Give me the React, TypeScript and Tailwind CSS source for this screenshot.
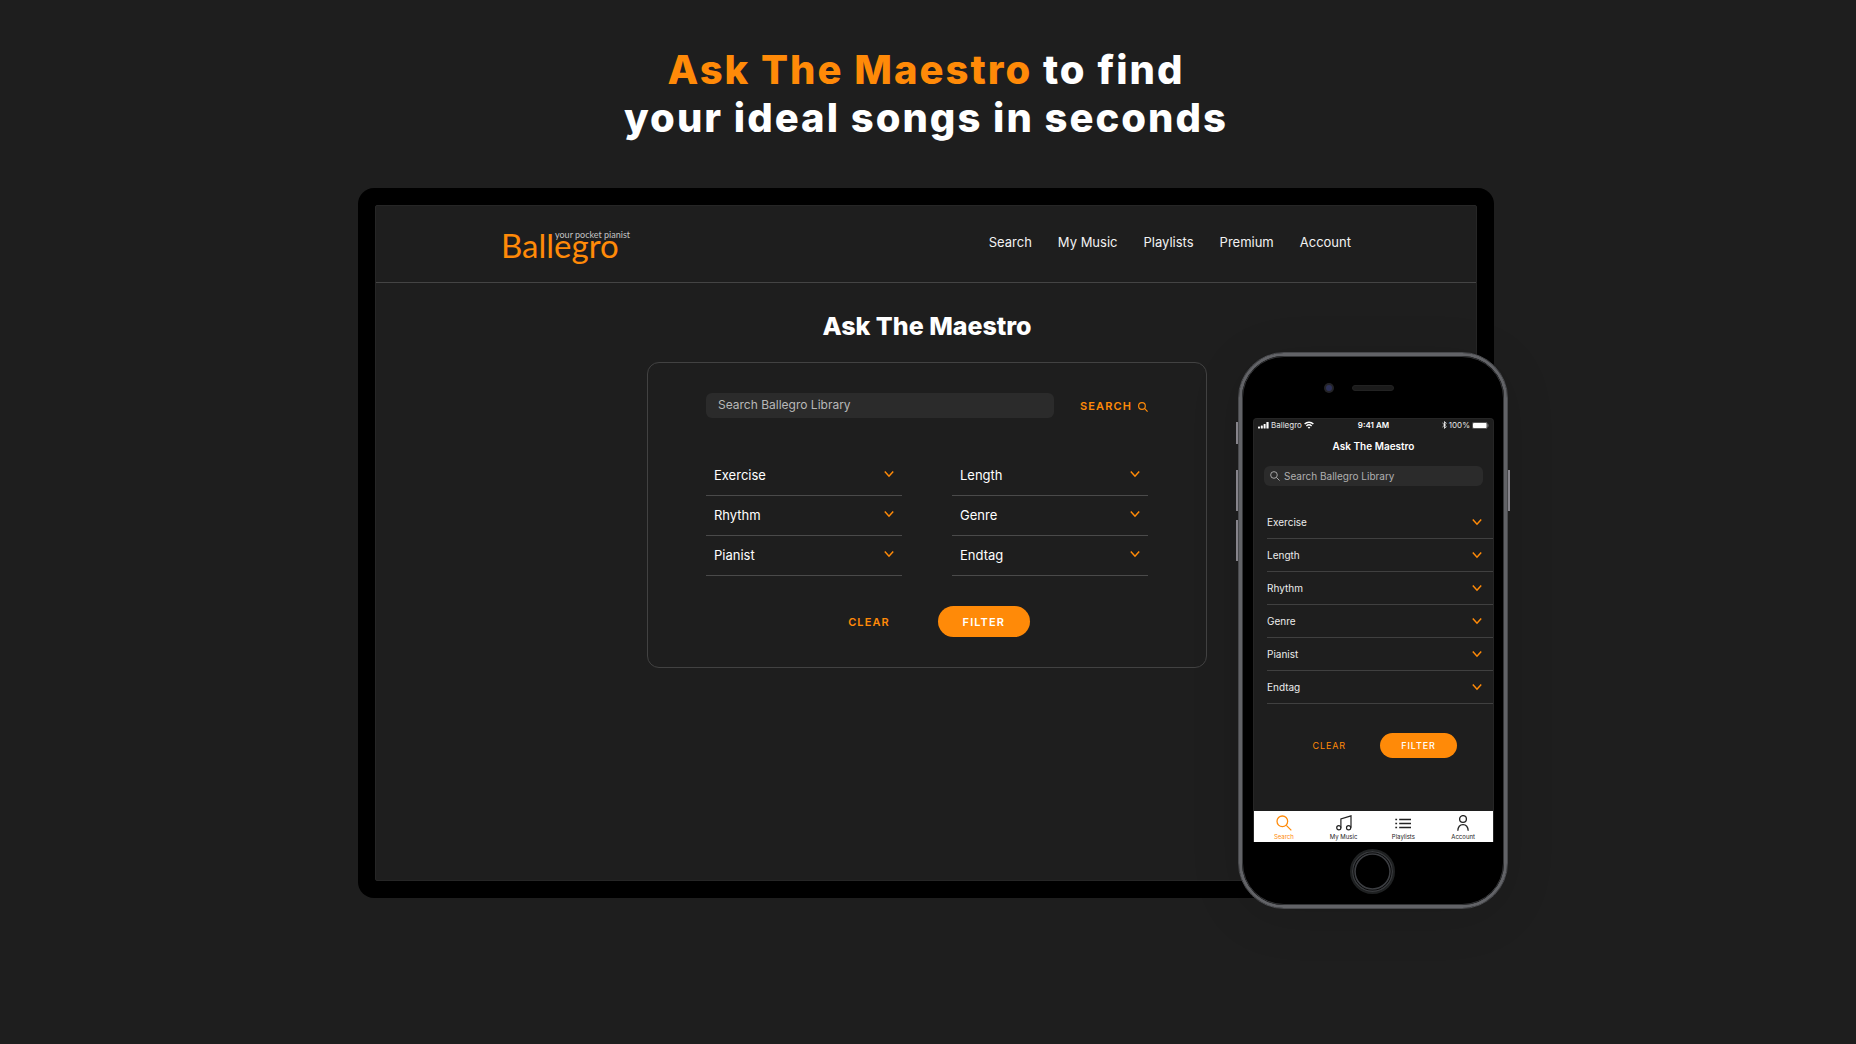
import React from "react";

function SearchIcon({ className, stroke = 2 }: { className: string; stroke?: number }) {
  return (
    <svg viewBox="0 0 24 24" fill="none" stroke="currentColor" strokeWidth={stroke} className={className} aria-hidden="true">
      <circle cx="9.5" cy="9.5" r="8" />
      <path d="M15.5 15.5 23 23" />
    </svg>
  );
}

function Chevron({ className }: { className: string }) {
  return (
    <svg viewBox="0 0 10 8" fill="none" stroke="currentColor" strokeWidth="1.5" className={className} aria-hidden="true">
      <path d="M.8 1.500 5 6.200 9.200 1.500" />
    </svg>
  );
}

function MusicIcon() {
  return (
    <svg viewBox="0 0 16 16" fill="none" stroke="currentColor" strokeWidth="1.2" className="size-4" aria-hidden="true">
      <circle cx="2.8" cy="12.8" r="2.1" />
      <circle cx="12.6" cy="12.8" r="2.1" />
      <path d="M4.9 12.8V4L15 .9v11.9" />
    </svg>
  );
}

function ListIcon() {
  return (
    <svg viewBox="0 0 16 16" fill="none" stroke="currentColor" strokeWidth="1.4" className="size-4" aria-hidden="true">
      <path d="M.3 4.5h1.8M.3 8.5h1.8M.3 12.5h1.8M4.2 4.5H16M4.2 8.5H16M4.2 12.5H16" />
    </svg>
  );
}

function AccountIcon() {
  return (
    <svg viewBox="0 0 16 16" fill="none" stroke="currentColor" strokeWidth="1.3" className="size-4" aria-hidden="true">
      <circle cx="8" cy="4" r="3.4" />
      <path d="M2.8 15.8C3 11.8 5 9.6 8 9.6s5 2.2 5.2 6.2" />
    </svg>
  );
}

const columns = [
  ["Exercise", "Rhythm", "Pianist"],
  ["Length", "Genre", "Endtag"],
];
const phoneFilters = ["Exercise", "Length", "Rhythm", "Genre", "Pianist", "Endtag"];
const navItems = ["Search", "My Music", "Playlists", "Premium", "Account"];
const tabs = [
  { name: "Search", icon: <SearchIcon className="size-4" stroke={1.9} />, active: true },
  { name: "My Music", icon: <MusicIcon />, active: false },
  { name: "Playlists", icon: <ListIcon />, active: false },
  { name: "Account", icon: <AccountIcon />, active: false },
];

function DesktopFilter({ name }: { name: string }) {
  return (
    <label className="relative block h-10 border-b border-[#4a4a4a]">
      <select aria-label={name} className="h-full w-full appearance-none bg-transparent pl-2 text-[13px] text-white outline-none">
        <option>{name}</option>
      </select>
      <Chevron className="pointer-events-none absolute top-3.5 right-2 h-2 w-2.5 text-[#ff8a08]" />
    </label>
  );
}

function PhoneFilter({ name }: { name: string }) {
  return (
    <label className="relative block h-[33px] border-b border-[#404040]">
      <select aria-label={name} className="h-full w-full appearance-none bg-transparent text-[10px] text-[#ececec] outline-none">
        <option>{name}</option>
      </select>
      <Chevron className="pointer-events-none absolute top-3 right-[11px] h-2 w-2.5 text-[#ff8a08]" />
    </label>
  );
}

function StatusBar() {
  return (
    <div className="grid grid-cols-3 items-center px-1 text-[8px] leading-3 text-[#e6e6e6]">
      <div className="flex items-center gap-0.5">
        <svg viewBox="0 0 11 7" className="h-[7px] w-[11px]" fill="#fff" aria-hidden="true">
          <rect x="0" y="4.5" width="2" height="2" rx=".5" />
          <rect x="2.8" y="3.5" width="2" height="3" rx=".5" />
          <rect x="5.6" y="2" width="2" height="4.5" rx=".5" />
          <rect x="8.4" y="0" width="2.2" height="6.5" rx=".5" />
        </svg>
        <span>Ballegro</span>
        <svg viewBox="0 0 16 12" className="h-2 w-[10px]" fill="none" stroke="#fff" strokeWidth="2.2" aria-hidden="true">
          <path d="M1 4.500c4-4 10-4 14 0M3.800 7.600c2.500-2.400 5.900-2.400 8.400 0" />
          <path d="M8 11.800 5.800 9.500c1.300-1.100 3.100-1.100 4.400 0Z" fill="#fff" stroke="none" />
        </svg>
      </div>
      <div className="text-center font-semibold text-white">9:41 AM</div>
      <div className="flex items-center justify-end gap-0.5">
        <svg viewBox="0 0 6 10" className="h-2 w-[5px]" fill="none" stroke="#fff" strokeWidth="1" aria-hidden="true">
          <path d="M.5 2.500 5.200 7 3 9.300V.7L5.200 3 .5 7.500" />
        </svg>
        <span>100%</span>
        <svg viewBox="0 0 17 7" className="h-[7px] w-[17px]" aria-hidden="true">
          <rect x=".4" y=".4" width="14.8" height="6.2" rx="1.2" fill="none" stroke="#888" strokeWidth=".6" />
          <rect x="1" y="1" width="13.6" height="5" rx=".7" fill="#fff" />
          <path d="M16 2.300v2.400" stroke="#888" strokeWidth=".8" />
        </svg>
      </div>
    </div>
  );
}

function Phone() {
  return (
    <div className="absolute top-[164px] -right-4 w-[274px] px-0.5">
      <span className="absolute top-[70px] left-0 h-[22px] w-1 bg-[#8e8c93]" />
      <span className="absolute top-[118px] left-0 h-[41px] w-1 bg-[#8e8c93]" />
      <span className="absolute top-[168px] left-0 h-[41px] w-1 bg-[#8e8c93]" />
      <span className="absolute top-[118px] right-0 h-[41px] w-1 bg-[#8e8c93]" />
      <div className="relative rounded-[46px] border border-[#48494c] bg-black shadow-[0_8px_50px_rgba(0,0,0,0.12)]">
        <div className="rounded-[45px] border-3 border-[#626367]">
          <div className="rounded-[42px] border border-[#343537] pr-[9px] pb-2.5 pl-2.5">
            <div className="relative flex h-[61px] items-center justify-center pr-0.5">
              <span className="absolute top-[26px] left-[71px] flex size-2.5 items-center justify-center rounded-full bg-[#242428]">
                <span className="size-1.5 rounded-full bg-[#2d3158]" />
              </span>
              <span className="h-1.5 w-[42px] rounded-full border border-[#222] bg-[#1b1b1b]" />
            </div>
            <section aria-label="Phone app" className="flex flex-col rounded-t border border-b-0 border-[#262626] bg-[#1e1e1e]">
              <StatusBar />
              <h2 className="pt-[7px] text-center text-[10px] leading-4 font-semibold text-white">Ask The Maestro</h2>
              <label className="mx-2.5 mt-3 flex h-5 items-center gap-1 rounded-md bg-[#2b2b2b] px-1.5 text-[#b0b0b0]">
                <SearchIcon className="size-2.5" stroke={2.2} />
                <input
                  type="search"
                  aria-label="Search Ballegro Library"
                  placeholder="Search Ballegro Library"
                  className="min-w-0 flex-1 bg-transparent text-[10px] outline-none placeholder:text-[#b0b0b0]"
                />
              </label>
              <div className="mt-5 ml-[13px]">
                {phoneFilters.map((name) => (
                  <PhoneFilter key={name} name={name} />
                ))}
              </div>
              <div className="mt-[29px] flex items-center justify-end gap-[34px] pr-9 text-[9px] tracking-widest">
                <button type="button" className="text-[#ff8a08]">CLEAR</button>
                <button type="button" className="h-[25px] w-[77px] rounded-full bg-[#ff8a08] font-medium text-white">FILTER</button>
              </div>
              <nav aria-label="Phone tabs" className="mt-[53px] grid h-[31px] grid-cols-4 bg-white">
                {tabs.map((tab) => (
                  <a
                    key={tab.name}
                    href="#"
                    className={
                      tab.active
                        ? "flex flex-col items-center pt-1 text-[6px] leading-3 text-[#ff8a08]"
                        : "flex flex-col items-center pt-1 text-[6px] leading-3 text-[#222]"
                    }
                  >
                    {tab.icon}
                    {tab.name}
                  </a>
                ))}
              </nav>
            </section>
            <div className="flex justify-center pt-[7px] pr-0.5">
              <button type="button" aria-label="Home" className="size-[45px] rounded-full">
                <svg viewBox="0 0 45 45" fill="none" className="size-full" aria-hidden="true">
                  <circle cx="22.5" cy="22.5" r="21.5" stroke="#1f2122" strokeWidth="2" />
                  <circle cx="22.5" cy="22.5" r="19.8" stroke="#37393c" strokeWidth="1.5" />
                  <circle cx="22.5" cy="22.5" r="17.5" stroke="#3c3e42" strokeWidth="1.6" />
                </svg>
              </button>
            </div>
          </div>
        </div>
      </div>
    </div>
  );
}

function Laptop() {
  return (
    <section aria-label="Web app" className="rounded-2xl bg-black p-[17px]">
      <div className="rounded-xs border border-[#262626] bg-[#1e1e1e]">
        <header className="flex h-[77px] items-center justify-between border-b border-[#444] px-[125px]">
          <a href="#" className="flex flex-col pb-0.5 font-['Lato',sans-serif] text-[33px] leading-6 text-[#ff8a08]">
            <span className="-mb-2 pl-[54px] text-[9px] leading-3 text-[#c4c4c4]">your pocket pianist</span>
            <span>Ballegro</span>
          </a>
          <nav className="flex gap-[26px] pb-0.5 text-[13px] text-[#f2f2f2]">
            {navItems.map((item) => (
              <a key={item} href="#">{item}</a>
            ))}
          </nav>
        </header>
        <div className="flex flex-col items-center pt-[27px] pb-[212px] pl-0.5">
          <h2 className="text-[25px] leading-8 font-extrabold text-white">Ask The Maestro</h2>
          <form className="mt-5 w-full max-w-[560px] rounded-xl border border-[#424242] px-[58px] pt-[30px] pb-[30px]">
            <div className="flex items-center justify-between">
              <input
                type="search"
                aria-label="Search Ballegro Library"
                placeholder="Search Ballegro Library"
                className="h-[25px] w-[348px] rounded-md bg-[#2b2b2b] px-3 pb-0.5 text-[12px] outline-none placeholder:text-[#b8b8b8]"
              />
              <button type="button" className="flex items-center gap-1.5 pt-0.5 text-[11px] font-semibold tracking-widest text-[#ff8a08]">
                SEARCH
                <SearchIcon className="size-2.5" stroke={2.8} />
              </button>
            </div>
            <div className="mt-[38px] grid grid-cols-2 gap-x-[50px]">
              {columns.map((names) => (
                <div key={names[0]}>
                  {names.map((name) => (
                    <DesktopFilter key={name} name={name} />
                  ))}
                </div>
              ))}
            </div>
            <div className="mt-[30px] flex items-center justify-center gap-12 pl-6 text-[11px] font-semibold tracking-widest">
              <button type="button" className="pt-0.5 text-[#ff8a08]">CLEAR</button>
              <button type="button" className="h-[31px] w-[92px] rounded-full bg-[#ff8a08] pt-0.5 text-white">FILTER</button>
            </div>
          </form>
        </div>
      </div>
    </section>
  );
}

export default function App() {
  return (
    <main className="flex min-h-screen flex-col items-center bg-[#1e1e1e] pt-[46px] pr-3 pb-16 pl-2 font-['Inter',sans-serif]">
      <h1 className="text-center text-[40px] leading-[48px] font-extrabold tracking-wider text-white">
        <span className="text-[#ff8a08]">Ask The Maestro</span> to find
        <br />
        your ideal songs in seconds
      </h1>
      <div className="relative mt-[46px] w-full max-w-[1136px]">
        <Laptop />
        <Phone />
      </div>
    </main>
  );
}
